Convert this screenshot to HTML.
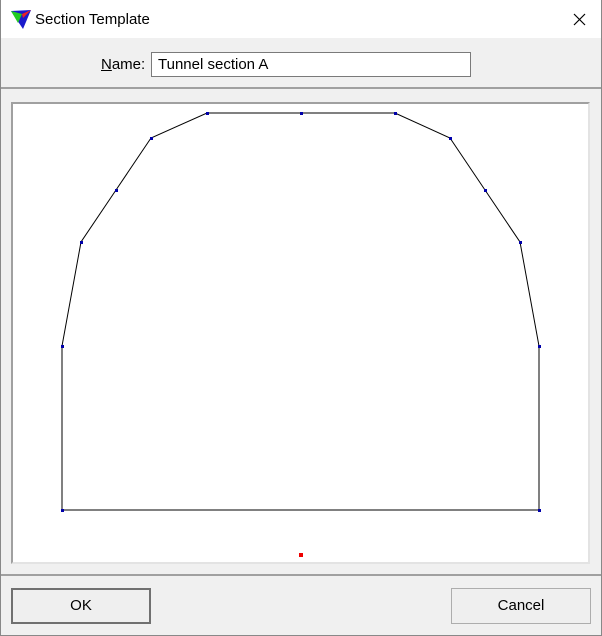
<html><body style="margin:0;width:602px;height:636px;background:#f0f0f0;font-family:'Liberation Sans',sans-serif;position:relative;overflow:hidden">
<div style="position:absolute;left:0;top:0;height:636px;border:1px solid #888;border-top:none;box-sizing:border-box;width:602px"></div>
<div style="position:absolute;left:1px;top:0;width:600px;height:38px;background:#fff"></div>
<svg style="position:absolute;left:10px;top:9px" width="22" height="20"><polygon points="1,2 21,1 13,20" fill="#1a1acc"/><polygon points="1,2 12,5 8,14" fill="#2c2"/><polygon points="12,5 21,1 13,9" fill="#e22"/></svg>
<div style="position:absolute;left:35px;top:11px;font-size:15px;color:#000">Section Template</div>
<svg style="position:absolute;left:573px;top:13px" width="13" height="13"><path d="M1,1L12,12M12,1L1,12" stroke="#000" stroke-width="1.2"/></svg>
<div style="position:absolute;left:101px;top:56px;font-size:15px"><u>N</u>ame:</div>
<div style="position:absolute;left:151px;top:52px;width:320px;height:25px;background:#fff;border:1px solid #7a7a7a;box-sizing:border-box;font-size:15px;padding:3px 0 0 6px">Tunnel section A</div>
<div style="position:absolute;left:1px;top:87px;width:600px;height:2px;background:#a0a0a0"></div>
<div style="position:absolute;left:11px;top:102px;width:579px;height:462px;background:#fff;border:2px solid #a0a0a0;border-right-color:#e3e3e3;border-bottom-color:#e3e3e3;box-sizing:border-box"></div>
<svg style="position:absolute;left:0;top:0" width="602" height="636">
<polyline points="62,510 62,346 81,242 116,190 151,138 207,113 301,113 395,113 450,138 485,190 520,242 539,346 539,510 62,510" fill="none" stroke="#000" stroke-width="1"/>
<g fill="#00a">
<rect x="61" y="509" width="3" height="3"/><rect x="61" y="345" width="3" height="3"/><rect x="80" y="241" width="3" height="3"/><rect x="115" y="189" width="3" height="3"/><rect x="150" y="137" width="3" height="3"/><rect x="206" y="112" width="3" height="3"/><rect x="300" y="112" width="3" height="3"/><rect x="394" y="112" width="3" height="3"/><rect x="449" y="137" width="3" height="3"/><rect x="484" y="189" width="3" height="3"/><rect x="519" y="241" width="3" height="3"/><rect x="538" y="345" width="3" height="3"/><rect x="538" y="509" width="3" height="3"/></g>
<rect x="299" y="553" width="4" height="4" fill="#e00"/>
</svg>
<div style="position:absolute;left:1px;top:574px;width:600px;height:2px;background:#a0a0a0"></div>
<div style="position:absolute;left:11px;top:588px;width:140px;height:36px;border:2px solid #707070;box-sizing:border-box;background:#efefef;text-align:center;line-height:32px;font-size:15px">OK</div>
<div style="position:absolute;left:451px;top:588px;width:140px;height:36px;border:1px solid #adadad;box-sizing:border-box;background:#efefef;text-align:center;line-height:34px;font-size:15px">Cancel</div>
</body></html>
